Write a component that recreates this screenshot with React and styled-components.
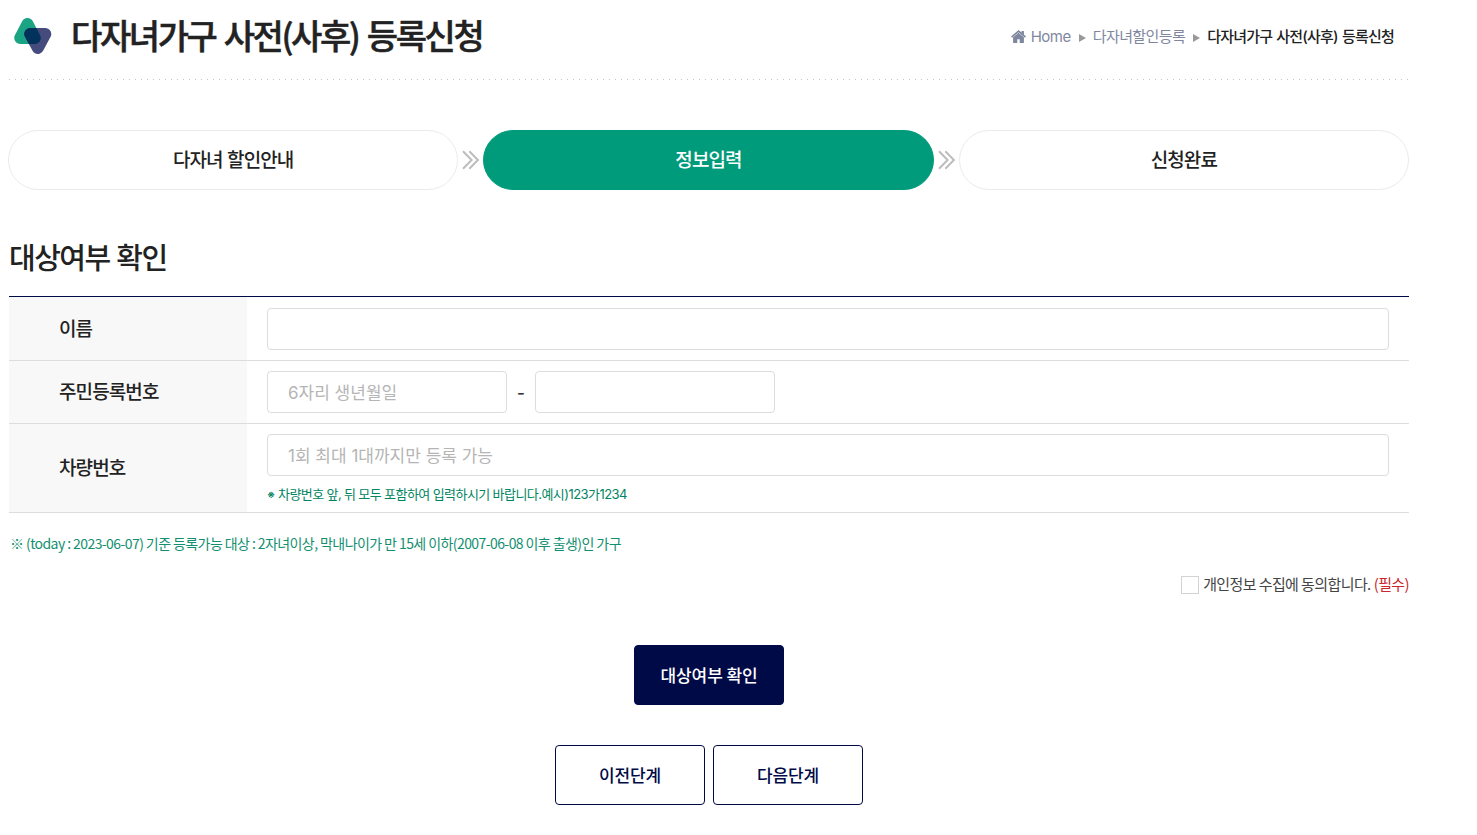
import React from "react";
import styled, { createGlobalStyle } from "styled-components";

const steps = [
  { label: "다자녀 할인안내" },
  { label: "정보입력", active: true },
  { label: "신청완료" },
];

function StepArrow() {
  return (
    <ArrowIcon viewBox="0 0 18 20" fill="none" stroke="#bdbdbd" strokeWidth="2">
      <path d="M1 1.3 L9.6 10 L1 18.7 M7.3 1.3 L15.9 10 L7.3 18.7" />
    </ArrowIcon>
  );
}

function LogoMark() {
  const up = "M13.5 6 L20.8 20 H6.2 Z";
  const down = "M16.2 16 H31.3 L23.8 30 Z";

  return (
    <Logo viewBox="0 0 38 37" strokeWidth="12" strokeLinejoin="round">
      <mask id="overlap" maskUnits="userSpaceOnUse" x="0" y="0" width="38" height="37">
        <path d={up} fill="#fff" stroke="#fff" />
      </mask>
      <path d={up} fill="#1aa483" stroke="#1aa483" />
      <path d={down} fill="#454b7c" stroke="#454b7c" />
      <path d={down} fill="#01325c" stroke="#01325c" mask="url(#overlap)" />
    </Logo>
  );
}

function App() {
  return (
    <Wrapper>
      <GlobalStyle />
      <Header>
        <LogoMark />
        <Title>다자녀가구 사전(사후) 등록신청</Title>
        <Breadcrumb>
          <HomeIcon viewBox="0 0 15 13" fill="#7f879f">
            <path d="M7.5 0 L10.6 2.6 V0.9 H12.9 V4.5 L15 6.4 L14 7.7 L7.5 2.3 L1 7.7 L0 6.4 Z" />
            <path d="M7.5 2.8 L12.9 7.3 V13 H8.7 V9.2 H6.3 V13 H2.1 V7.3 Z" />
          </HomeIcon>
          <Crumb $spacing="-0.5px">Home</Crumb>
          <Triangle />
          <Crumb $spacing="-0.6px">다자녀할인등록</Crumb>
          <Triangle />
          <Crumb $current>다자녀가구 사전(사후) 등록신청</Crumb>
        </Breadcrumb>
      </Header>

      <Steps>
        {steps.map((step, index) => (
          <React.Fragment key={step.label}>
            {index > 0 && <StepArrow />}
            <Step $active={step.active}>{step.label}</Step>
          </React.Fragment>
        ))}
      </Steps>

      <SectionTitle>대상여부 확인</SectionTitle>
      <Form>
        <Row $height="63px">
          <Label>이름</Label>
          <Field $top="11px">
            <Input />
          </Field>
        </Row>
        <Row $height="62px">
          <Label>주민등록번호</Label>
          <Field>
            <Pair>
              <Input $width="240px" placeholder="6자리 생년월일" />
              <Dash>-</Dash>
              <Input $width="240px" />
            </Pair>
          </Field>
        </Row>
        <Row $height="88px">
          <Label>차량번호</Label>
          <Field>
            <Input placeholder="1회 최대 1대까지만 등록 가능" />
            <Hint>
              <Mark>※</Mark>차량번호 앞, 뒤 모두 포함하여 입력하시기 바랍니다.예시)123가1234
            </Hint>
          </Field>
        </Row>
      </Form>

      <Notice>
        ※ (today : 2023-06-07) 기준 등록가능 대상 : 2자녀이상, 막내나이가 만 15세 이하(2007-06-08 이후 출생)인 가구
      </Notice>

      <Agree>
        <Checkbox type="checkbox" />
        <AgreeText>개인정보 수집에 동의합니다.</AgreeText>
        <Required>(필수)</Required>
      </Agree>

      <Buttons $top="50px">
        <Button $primary>대상여부 확인</Button>
      </Buttons>
      <Buttons $top="40px">
        <Button>이전단계</Button>
        <Button>다음단계</Button>
      </Buttons>
    </Wrapper>
  );
}

const GlobalStyle = createGlobalStyle`
  * {
    box-sizing: border-box;
  }

  body {
    margin: 0;
    background: #fff;
    color: #222;
    font-family: "Noto Sans CJK KR", "Noto Sans", sans-serif;
  }

  input,
  button {
    font-family: inherit;
  }
`;

const Wrapper = styled.div`
  width: 1400px;
  margin-left: 9px;
`;

const Header = styled.header`
  display: flex;
  align-items: center;
  height: 80px;
  padding: 0 15px 8px 5px;
  background: repeating-linear-gradient(to right, #c4c4c4 0 1px, transparent 1px 6px) left bottom / 100% 1px
    no-repeat;
`;

const Logo = styled.svg`
  width: 38px;
  height: 37px;
`;

const Title = styled.h1`
  margin: 0 auto 2px 19px;
  font-size: 34px;
  font-weight: 500;
  line-height: 40px;
  letter-spacing: -2.4px;
  word-spacing: 3px;
  white-space: nowrap;
  -webkit-text-stroke: 0.5px #222;
`;

const Breadcrumb = styled.nav`
  display: flex;
  align-items: center;
`;

const HomeIcon = styled.svg`
  width: 15px;
  height: 13px;
  margin-right: 5px;
`;

const Crumb = styled.span`
  padding-top: 2px;
  color: ${(props) => (props.$current ? "#222" : "#7f879f")};
  font-family: Inter, "Noto Sans CJK KR", sans-serif;
  font-size: 15px;
  font-weight: ${(props) => (props.$current ? 500 : 400)};
  line-height: 20px;
  letter-spacing: ${(props) => props.$spacing || "-0.8px"};
  word-spacing: 1px;
  white-space: nowrap;
`;

const Triangle = styled.i`
  margin: 3px 7px 0 8px;
  border-left: 7px solid #999;
  border-top: 4px solid transparent;
  border-bottom: 4px solid transparent;
`;

const Steps = styled.div`
  display: flex;
  align-items: center;
  margin: 50px 0 0 -1px;
`;

const Step = styled.div`
  flex: 1;
  height: 60px;
  border: 1px solid ${(props) => (props.$active ? "#009b7a" : "#ebebeb")};
  border-radius: 30px;
  background: ${(props) => (props.$active ? "#009b7a" : "#fff")};
  color: ${(props) => (props.$active ? "#fff" : "#222")};
  font-size: 19px;
  font-weight: 500;
  line-height: 56px;
  letter-spacing: -0.9px;
  word-spacing: 1px;
  text-align: center;
`;

const ArrowIcon = styled.svg`
  width: 18px;
  height: 20px;
  margin: 0 3px 0 4px;
`;

const SectionTitle = styled.h2`
  margin: 45px 0 19px;
  font-size: 29px;
  font-weight: 500;
  line-height: 42px;
  letter-spacing: -1.5px;
  word-spacing: 1.5px;
`;

const Form = styled.div`
  border-top: 1px solid #000a47;
`;

const Row = styled.div`
  display: flex;
  box-sizing: content-box;
  height: ${(props) => props.$height};
  border-bottom: 1px solid #ddd;
`;

const Label = styled.div`
  display: flex;
  align-items: center;
  width: 238px;
  padding: 0 0 3px 50px;
  background: #f8f8f8;
  font-size: 19px;
  font-weight: 500;
  letter-spacing: -0.9px;
`;

const Field = styled.div`
  flex: 1;
  padding: ${(props) => props.$top || "10px"} 20px 0;
`;

const Pair = styled.div`
  display: flex;
  align-items: center;
`;

const Input = styled.input`
  display: block;
  width: ${(props) => props.$width || "100%"};
  height: 42px;
  padding: 2px 20px 0;
  border: 1px solid #ddd;
  border-radius: 4px;
  font-family: Inter, "Noto Sans CJK KR", sans-serif;
  font-size: 17px;
  letter-spacing: 0;

  &::placeholder {
    color: #b5b5b5;
  }
`;

const Dash = styled.span`
  width: 28px;
  padding-top: 1px;
  color: #333;
  font-family: Inter, sans-serif;
  font-size: 17px;
  font-weight: 500;
  text-align: center;
`;

const Hint = styled.p`
  margin: 8px 0 0;
  color: #00855f;
  font-family: Inter, "Noto Sans CJK KR", sans-serif;
  font-size: 13px;
  line-height: 20px;
  letter-spacing: -0.55px;
  word-spacing: -0.2px;
`;

const Mark = styled.span`
  display: inline-block;
  width: 11px;
  font-size: 10px;
  font-weight: 700;
  line-height: 10px;
  vertical-align: 1px;
`;

const Notice = styled.p`
  margin: 19px 0 0 1px;
  color: #128f70;
  font-size: 14px;
  line-height: 22px;
  letter-spacing: -0.58px;
`;

const Agree = styled.label`
  display: flex;
  align-items: center;
  justify-content: flex-end;
  margin-top: 21px;
  height: 20px;
  font-size: 15px;
  line-height: 20px;
  letter-spacing: -0.6px;
`;

const Checkbox = styled.input`
  appearance: none;
  width: 18px;
  height: 18px;
  margin: 0 4px 0 0;
  border: 1px solid #d3d3d3;
  background: #fff;
`;

const AgreeText = styled.span`
  padding-bottom: 3px;
  color: #444;
`;

const Required = styled.span`
  margin-left: 3px;
  padding-bottom: 3px;
  color: #c9282d;
`;

const Buttons = styled.div`
  display: flex;
  justify-content: center;
  gap: 8px;
  margin-top: ${(props) => props.$top};
`;

const Button = styled.button`
  width: 150px;
  height: 60px;
  padding: 0 0 1px;
  border: 1px solid #000a47;
  border-radius: 4px;
  background: ${(props) => (props.$primary ? "#000a47" : "#fff")};
  color: ${(props) => (props.$primary ? "#fff" : "#000a47")};
  font-size: 17px;
  font-weight: 500;
  letter-spacing: -0.1px;
`;

export default App;
